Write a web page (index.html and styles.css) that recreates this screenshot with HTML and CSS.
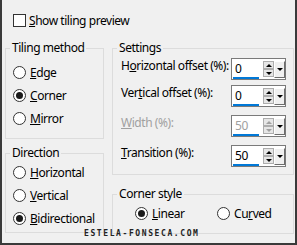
FILE: index.html
```html
<!DOCTYPE html>
<html lang="en">
<head>
  <meta charset="UTF-8">
  <title>Tiling</title>
  <link rel="stylesheet" href="styles.css">
</head>
<body>
  <div class="dialog">
    <div class="check-row">
      <span class="checkbox"></span>
      <span><u>S</u>how tiling preview</span>
    </div>
    <div class="columns">
      <div class="col-left">
        <fieldset class="group">
          <legend>Tiling method</legend>
          <div class="group-body tiling-body">
            <div class="radio"><span class="radio-dot"></span><span><u>E</u>dge</span></div>
            <div class="radio"><span class="radio-dot checked"></span><span><u>C</u>orner</span></div>
            <div class="radio"><span class="radio-dot"></span><span><u>M</u>irror</span></div>
          </div>
        </fieldset>
        <fieldset class="group">
          <legend>Direction</legend>
          <div class="group-body direction-body">
            <div class="radio"><span class="radio-dot"></span><span><u>H</u>orizontal</span></div>
            <div class="radio"><span class="radio-dot"></span><span><u>V</u>ertical</span></div>
            <div class="radio"><span class="radio-dot checked"></span><span><u>B</u>idirectional</span></div>
          </div>
        </fieldset>
      </div>
      <div class="col-right">
        <fieldset class="group">
          <legend>Settings</legend>
          <div class="group-body settings-body">
            <div class="field">
              <span class="field-label">H<u>o</u>rizontal offset (%):</span>
              <div class="spin">
                <div class="spin-field">0</div>
                <div class="spin-arrows"><span class="arrow up"></span><span class="arrow down"></span></div>
                <div class="spin-drop"></div>
              </div>
            </div>
            <div class="field field-near">
              <span class="field-label">Ver<u>t</u>ical offset (%):</span>
              <div class="spin">
                <div class="spin-field">0</div>
                <div class="spin-arrows"><span class="arrow up"></span><span class="arrow down"></span></div>
                <div class="spin-drop"></div>
              </div>
            </div>
            <div class="field disabled">
              <span class="field-label"><u>W</u>idth (%):</span>
              <div class="spin">
                <div class="spin-field">50</div>
                <div class="spin-arrows"><span class="arrow up"></span><span class="arrow down"></span></div>
                <div class="spin-drop"></div>
              </div>
            </div>
            <div class="field">
              <span class="field-label"><u>T</u>ransition (%):</span>
              <div class="spin">
                <div class="spin-field">50</div>
                <div class="spin-arrows"><span class="arrow up"></span><span class="arrow down"></span></div>
                <div class="spin-drop"></div>
              </div>
            </div>
          </div>
        </fieldset>
        <fieldset class="group">
          <legend>Corner style</legend>
          <div class="group-body corner-body">
            <div class="radio corner-item"><span class="radio-dot checked"></span><span><u>L</u>inear</span></div>
            <div class="radio"><span class="radio-dot"></span><span>Cu<u>r</u>ved</span></div>
          </div>
        </fieldset>
      </div>
    </div>
    <div class="watermark">ESTELA-FONSECA.COM</div>
  </div>
</body>
</html>
```

FILE: styles.css
```css
body { margin: 0; background: #f0f0f0; font-family: "Noto Sans", sans-serif; font-size: 12px; letter-spacing: -0.45px; color: #000; }
u { text-underline-offset: 1px; }
.dialog { position: relative; width: 297px; height: 245px; box-sizing: border-box; border: 2px solid #3a3a3a; border-top: 0; background: #f0f0f0; overflow: hidden; white-space: nowrap; }

.check-row { display: flex; align-items: center; height: 13px; line-height: 13px; margin: 14px 0 0 11px; }
.checkbox { width: 13px; height: 13px; box-sizing: border-box; border: 1px solid #333; background: #fff; margin-right: 3px; }

.columns { display: flex; gap: 8px; margin: 13px 0 0 3px; }
.col-left { width: 99px; display: flex; flex-direction: column; gap: 6px; }
.col-right { width: 182px; display: flex; flex-direction: column; gap: 11px; }

.group { margin: 0; padding: 0; border: 1px solid #dcdcdc; min-width: 0; }
.group legend { margin-left: 4px; padding: 0 2px; line-height: 16px; }

.tiling-body { padding: 5px 0 8px 7px; }
.direction-body { padding: 0 0 2px 7px; }
.settings-body { padding: 2px 7px 7px 8px; }
.corner-body { display: flex; padding: 0 0 8px 22px; }

.radio { display: flex; align-items: center; height: 23px; }
.radio-dot { width: 13px; height: 13px; box-sizing: border-box; border: 1px solid #333; border-radius: 50%; background: #fff; margin-right: 4px; display: flex; align-items: center; justify-content: center; }
.radio-dot.checked::after { content: ""; width: 7px; height: 7px; border-radius: 50%; background: #1a1a1a; }
.corner-item { width: 82px; }

.field { display: flex; align-items: flex-start; height: 22px; margin-top: 8px; }
.field:first-child { margin-top: 0; }
.field.field-near { margin-top: 5px; }
.field-label { flex: 1; line-height: 16px; }
.disabled .field-label, .disabled .spin-field { color: #a0a0a0; }

.spin { width: 55px; height: 22px; box-sizing: border-box; border: 1px solid #7a7a7a; background: #fff; display: flex; align-items: center; }
.spin-field { align-self: stretch; width: 26px; box-sizing: border-box; margin: 1px 0 0 1px; padding-left: 2px; border-bottom: 2px solid #0078d7; display: flex; align-items: center; line-height: 14px; }
.spin-arrows { display: flex; flex-direction: column; margin-left: 4px; }
.arrow { width: 11px; height: 8px; box-sizing: border-box; border: 1px solid #adadad; background: #e6e6e6; display: flex; align-items: center; justify-content: center; }
.arrow.up::after { content: ""; border-left: 3px solid transparent; border-right: 3px solid transparent; border-bottom: 3px solid #000; }
.arrow.down::after { content: ""; border-left: 3px solid transparent; border-right: 3px solid transparent; border-top: 3px solid #000; }
.disabled .arrow.up::after { border-bottom-color: #a0a0a0; }
.disabled .arrow.down::after { border-top-color: #a0a0a0; }
.spin-drop { width: 11px; height: 17px; box-sizing: border-box; border: 1px solid; border-color: #fff #6d6d6d #6d6d6d #fff; background: #f0f0f0; display: flex; align-items: center; justify-content: center; }
.spin-drop::after { content: ""; border-left: 3px solid transparent; border-right: 3px solid transparent; border-top: 3px solid #000; }

.watermark { position: absolute; left: 82px; top: 229px; font-family: "DejaVu Sans Mono", monospace; font-weight: bold; font-size: 8px; letter-spacing: 1.6px; line-height: 9px; color: #222; }
```
